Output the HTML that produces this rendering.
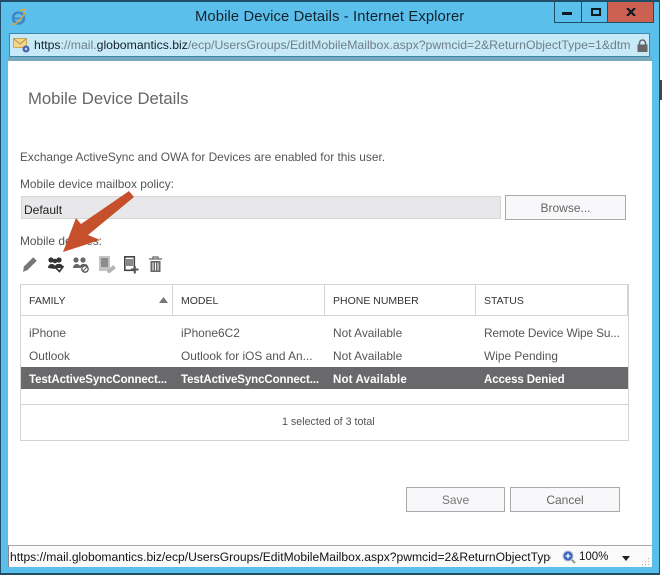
<!DOCTYPE html>
<html><head><meta charset="utf-8"><style>
html,body{margin:0;padding:0;background:#fff}
#w{position:relative;width:662px;height:576px;overflow:hidden;background:#fff;font-family:"Liberation Sans",sans-serif;color:#444}
#w div{position:absolute;white-space:nowrap;box-sizing:border-box}
.t{font-size:11.9px;line-height:14px;color:#555}
.h{font-size:10.5px;line-height:14px;color:#333}
.s{color:#fff;font-weight:bold;font-size:11.5px;line-height:14px;letter-spacing:-.1px}
.b{background:#f8f7f9;border:1px solid #a9a9a9;text-align:center;font-size:12px;color:#666}
</style></head><body><div id="w">
<div style="left:0;top:0;width:660px;height:575px;background:#5bbfec;border:1px solid #1f4e66;border-width:2px 1px 2px 1px"></div>
<div style="left:660px;top:80px;width:2px;height:20px;background:#444"></div>
<div style="left:195px;top:8px;font-size:14.8px;line-height:18px;color:#14222c;letter-spacing:.11px">Mobile Device Details - Internet Explorer</div>
<svg style="position:absolute;left:10px;top:8px" width="18" height="18" viewBox="0 0 18 18"><circle cx="8.500" cy="10" r="5.500" fill="none" stroke="#3f86c8" stroke-width="2.600"/><path d="M3 10.500h11" stroke="#3f86c8" stroke-width="1.800"/><path d="M1.500 16c1 1.500 7-1 11.500-8 2-3.500 4-6 1.500-6.500-1.500-.3-3 .3-5 1.500" fill="none" stroke="#e0a93a" stroke-width="1.400"/></svg>
<div style="left:554px;top:2px;width:54px;height:21px;border:1px solid #1f4e66;border-top:0;background:#5bbfec"></div>
<div style="left:581px;top:2px;width:1px;height:21px;background:#1f4e66"></div>
<div style="left:608px;top:2px;width:46px;height:21px;background:#cd6151;border-bottom:1px solid #1f4e66;border-right:1px solid #1f4e66"></div>
<div style="left:562px;top:12px;width:10px;height:3px;background:#0c1a22"></div>
<div style="left:591px;top:8px;width:10px;height:8px;border:2px solid #0c1a22"></div>
<svg style="position:absolute;left:626px;top:8px" width="10" height="8" viewBox="0 0 10 8"><path d="M1 0 9 8M9 0 1 8" stroke="#0c1a22" stroke-width="2.200"/></svg>
<div style="left:9px;top:33px;width:641px;height:24px;background:#c7e9f8;border:1px solid #3d87a8"></div>
<svg style="position:absolute;left:13px;top:38px" width="18" height="15" viewBox="0 0 18 15"><rect x="0.500" y="0.500" width="13" height="9" fill="#f3d68a" stroke="#c9a85a"/><path d="M1 1l6 5 6-5" fill="none" stroke="#b3934a"/><circle cx="13" cy="11" r="3.500" fill="#4a66b0"/><circle cx="13" cy="11" r="1.200" fill="#cfd9f0"/></svg>
<div style="left:34px;top:38px;width:597px;overflow:hidden;font-size:12.250px;line-height:15px;color:#6f7f88"><span style="color:#14222c">https</span>://mail.<span style="color:#14222c">globomantics.biz</span>/ecp/UsersGroups/EditMobileMailbox.aspx?pwmcid=2&amp;ReturnObjectType=1&amp;dtm</div>
<svg style="position:absolute;left:637px;top:39px" width="11" height="13" viewBox="0 0 11 13"><path d="M2.500 6V4a3 3 0 0 1 6 0v2" fill="none" stroke="#666" stroke-width="1.500"/><rect x="0.500" y="5.500" width="10" height="7.500" fill="#666"/></svg>
<div style="left:8px;top:57px;width:644px;height:4px;background:#79a9be"></div>
<div style="left:8px;top:61px;width:644px;height:485px;background:#fff"></div>
<div style="left:28px;top:89px;font-size:16.700px;line-height:20px;color:#666">Mobile Device Details</div>
<div class="t" style="left:20px;top:150px">Exchange ActiveSync and OWA for Devices are enabled for this user.</div>
<div class="t" style="left:20px;top:177px">Mobile device mailbox policy:</div>
<div style="left:21px;top:196px;width:480px;height:23px;background:#e8e7ea;border:1px solid #d3d6d6"></div>
<div style="left:24px;top:203px;font-size:12px;line-height:15px;color:#222">Default</div>
<div class="b" style="left:505px;top:195px;width:121px;height:25px;line-height:24px">Browse...</div>
<div class="t" style="left:20px;top:234px">Mobile devices:</div>
<svg style="position:absolute;left:22px;top:255px" width="145" height="20" viewBox="0 0 145 20">
<path d="M3 14L13 4" stroke="#777" stroke-width="5"/><path d="M1 17l1-5 3 3z" fill="#777"/>
<g fill="#333"><circle cx="29" cy="5" r="2.600"/><circle cx="37" cy="5" r="2.600"/><path d="M26 13c0-5 6-5 7-2 1-3 8-3 8 1v1H34l-1 1z"/></g><circle cx="33" cy="6" r="2.300" fill="#333"/><path d="M34 13l3.500 3.500 4-5.500" fill="none" stroke="#333" stroke-width="1.600"/>
<g fill="#666"><circle cx="54" cy="5" r="2.600"/><circle cx="61" cy="5" r="2.600"/><path d="M51 13c0-5 6-5 7-2 1-3 8-3 8 1H59v1z"/></g><circle cx="63" cy="14" r="3.200" fill="#fff" stroke="#555" stroke-width="1.300"/><path d="M61 16l4-4" stroke="#555"/>
<rect x="77" y="1" width="11" height="15" fill="#c3c3c3"/><rect x="79" y="3" width="7" height="9" fill="#8c8c8c"/><path d="M85 16l6-6 3 3-6 5h-2z" fill="#b5b5b5"/>
<rect x="102.800" y="1.800" width="9.500" height="13.500" fill="#fff" stroke="#444" stroke-width="1.600"/><rect x="104" y="4" width="7" height="7" fill="#888"/><path d="M109 14.500h7.500M112.800 11v7.500" stroke="#555" stroke-width="2"/>
<path d="M127 4h13M131 4V2h5v2" fill="none" stroke="#666" stroke-width="1.300"/><path d="M128.500 6h10v11h-10z" fill="#666"/><path d="M131 7.500v8M133.500 7.500v8M136 7.500v8" stroke="#fff" stroke-width="1"/>
</svg>
<svg style="position:absolute;left:0;top:0" width="662" height="576"><path d="M129 191L134 197 88 235 100 240 63 252 76 218 81 224z" fill="#c7502c"/></svg>
<div style="left:20px;top:284px;width:609px;height:157px;border:1px solid #d0d6d6"></div>
<div style="left:21px;top:315px;width:607px;height:1px;background:#cfd5d5"></div>
<div style="left:172px;top:285px;width:1px;height:30px;background:#cfd5d5"></div>
<div style="left:324px;top:285px;width:1px;height:30px;background:#cfd5d5"></div>
<div style="left:475px;top:285px;width:1px;height:30px;background:#cfd5d5"></div>
<div style="left:627px;top:285px;width:2px;height:30px;background:#cfd5d5"></div>
<div class="h" style="left:29px;top:294px">FAMILY</div>
<div class="h" style="left:181px;top:294px">MODEL</div>
<div class="h" style="left:333px;top:294px">PHONE NUMBER</div>
<div class="h" style="left:484px;top:294px">STATUS</div>
<svg style="position:absolute;left:159px;top:297px" width="9" height="6"><path d="M0 6L4.500 0 9 6z" fill="#777"/></svg>
<div class="t" style="left:29px;top:326px">iPhone</div>
<div class="t" style="left:181px;top:326px">iPhone6C2</div>
<div class="t" style="left:333px;top:326px">Not Available</div>
<div class="t" style="left:484px;top:326px;letter-spacing:-.15px">Remote Device Wipe Su...</div>
<div class="t" style="left:29px;top:349px">Outlook</div>
<div class="t" style="left:181px;top:349px">Outlook for iOS and An...</div>
<div class="t" style="left:333px;top:349px">Not Available</div>
<div class="t" style="left:484px;top:349px">Wipe Pending</div>
<div style="left:21px;top:367px;width:607px;height:22px;background:#69686b"></div>
<div class="s" style="left:29px;top:373px">TestActiveSyncConnect...</div>
<div class="s" style="left:181px;top:373px">TestActiveSyncConnect...</div>
<div class="s" style="left:333px;top:373px;letter-spacing:.15px">Not Available</div>
<div class="s" style="left:484px;top:373px">Access Denied</div>
<div style="left:21px;top:404px;width:607px;height:1px;background:#cfd5d5"></div>
<div class="t" style="left:282px;top:415px;font-size:10.700px">1 selected of 3 total</div>
<div class="b" style="left:406px;top:487px;width:99px;height:25px;line-height:24px;color:#777">Save</div>
<div class="b" style="left:510px;top:487px;width:110px;height:25px;line-height:24px">Cancel</div>
<div style="left:8px;top:545px;width:644px;height:22px;background:#fbfbfb;border-top:1px solid #a9a9a9;border-left:1px solid #888"></div>
<div style="left:10px;top:550px;width:541px;overflow:hidden;font-size:12.100px;line-height:15px;color:#111">https://mail.globomantics.biz/ecp/UsersGroups/EditMobileMailbox.aspx?pwmcid=2&amp;ReturnObjectType</div>
<svg style="position:absolute;left:562px;top:550px" width="14" height="14" viewBox="0 0 14 14"><path d="M9 9l4 4" stroke="#998" stroke-width="2"/><circle cx="6" cy="6" r="5" fill="#3b62b8" stroke="#b9c6dd"/><path d="M3.500 6h5M6 3.500v5" stroke="#fff" stroke-width="1.300"/></svg>
<div style="left:579px;top:550px;font-size:11.500px;line-height:15px;color:#111">100%</div>
<svg style="position:absolute;left:622px;top:556px" width="8" height="5"><path d="M0 0h8L4 5z" fill="#222"/></svg>
<svg style="position:absolute;left:641px;top:558px" width="9" height="9"><path d="M7 0h1v1H7zM4 3h1v1H4zM7 3h1v1H7zM1 6h1v1H1zM4 6h1v1H4zM7 6h1v1H7z" fill="#aaa"/></svg>
</div></body></html>
